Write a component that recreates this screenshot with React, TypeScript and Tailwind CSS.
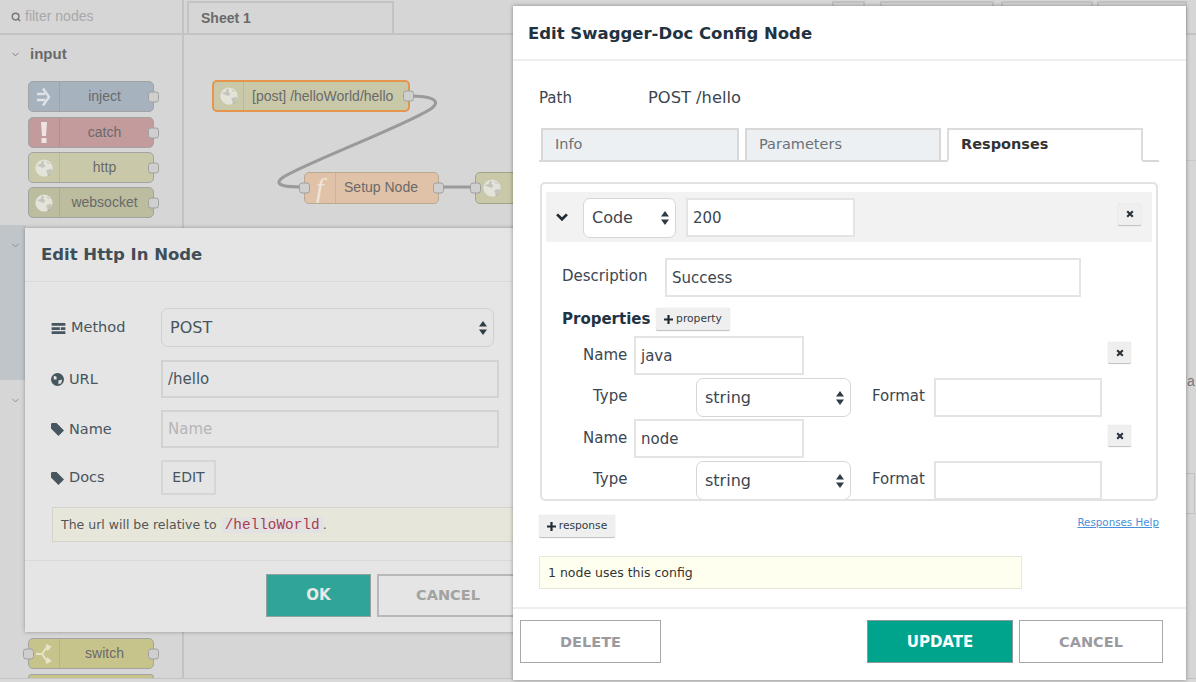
import { ChevronDown, Search } from 'lucide-react';
import { ReactNode } from 'react';

const globe = (
  <svg viewBox="0 0 24 24" className="h-[18px] w-[18px]">
    <circle cx="12" cy="12" r="11.5" fill="#e3e3da" />
    <path d="M2 8l5-1 3-5 2 1-1 3 3 3-3 3-5-2zM21 6l-4 0-2-3zM15 15l6-2 2 2-3 6-3 2-1-5z" fill="#00000022" />
  </svg>
);

const Port = ({ side }: { side: 'left' | 'right' }) => (
  <span
    className={`absolute top-1/2 h-[11px] w-[11px] -translate-y-1/2 rounded-[3px] border border-[#a0a0a0] bg-[#cfcfcf] ${
      side === 'left' ? 'left-[-6px]' : 'right-[-6px]'
    }`}
  />
);

const PaletteNode = ({
  label,
  color,
  icon,
  className = '',
  inPort = false,
}: {
  label: string;
  color: string;
  icon: ReactNode;
  className?: string;
  inPort?: boolean;
}) => (
  <div className={`relative flex h-[31px] w-[126px] rounded-[5px] border border-[#a3a3a3] ${color} ${className}`}>
    <div className="flex w-[31px] items-center justify-center border-r border-[#00000014]">{icon}</div>
    <div className="flex-1 pr-1 text-center text-[14px] leading-[29px] text-[#6a6a6a]">{label}</div>
    {inPort && <Port side="left" />}
    <Port side="right" />
  </div>
);

const Updown = () => (
  <svg viewBox="0 0 8 14" className="h-[14px] w-[8px]" fill="#2f3b45">
    <path d="M4 0l4 5.5H0zM4 14l4-5.5H0z" />
  </svg>
);

const Select = ({ value, className }: { value: string; className: string }) => (
  <div className={`flex items-center justify-between rounded-[7px] border border-[#d6d6d6] bg-white pr-[6px] pl-[8px] text-[16px] text-[#3b4650] ${className}`}>
    <span>{value}</span>
    <Updown />
  </div>
);

const Input = ({ value, className }: { value?: string; className: string }) => (
  <div className={`flex items-center border-2 border-[#e4e4e4] bg-white px-[5px] pt-[1px] text-[15px] text-[#3b4650] ${className}`}>{value}</div>
);

const CloseBtn = () => (
  <div className="flex h-[22px] w-[23px] items-center justify-center rounded-[2px] border-b border-b-[#c4c4c4] bg-[#efefef] shadow-[0_0_1px_#bbb]">
    <svg viewBox="0 0 10 10" className="h-[8px] w-[8px]" stroke="#27313a" strokeWidth="2.6">
      <path d="M1.5 1.5l7 7M8.5 1.5l-7 7" />
    </svg>
  </div>
);

const AddBtn = ({ label, className }: { label: string; className: string }) => (
  <div className={`flex h-[23px] items-center justify-center gap-[3px] rounded-[2px] border-b border-b-[#c4c4c4] bg-[#efefef] pt-[1px] text-[10.7px] text-[#2f3b45] shadow-[0_0_1px_#bbb] ${className}`}>
    <svg viewBox="0 0 9 9" className="h-[9px] w-[9px]" stroke="#222c34" strokeWidth="2.2">
      <path d="M4.5 0v9M0 4.5h9" />
    </svg>
    {label}
  </div>
);

const PropertyRows = ({ name }: { name: string }) => (
  <div className="flex flex-col">
    <div className="flex h-[42px] items-start">
      <span className="mt-[8px] w-[51px] text-[15px] text-[#3b4650]">Name</span>
      <Input value={name} className="h-[39px] w-[170px]" />
      <div className="mt-[6px] ml-[304px]">
        <CloseBtn />
      </div>
    </div>
    <div className="flex h-[41px] items-start">
      <span className="mt-[7px] ml-[10px] w-[103px] text-[15px] text-[#3b4650]">Type</span>
      <Select value="string" className="h-[39px] w-[155px]" />
      <span className="mt-[7px] ml-[21px] w-[62px] text-[15px] text-[#3b4650]">Format</span>
      <Input className="h-[39px] w-[168px]" />
    </div>
  </div>
);

const Tab = ({ label, className, active = false }: { label: string; className: string; active?: boolean }) => (
  <div
    className={`flex h-[32px] items-center border-2 px-[12px] text-[14.5px] ${className} ${
      active
        ? 'mb-[-2px] h-[34px] border-[#dcdcdc] border-b-white bg-white font-bold text-[#333]'
        : 'border-[#d8d8d8] border-b-0 bg-[#edf0f2] text-[#6b7278]'
    }`}
  >
    {label}
  </div>
);

const LeftRow = ({ icon, label, className = '', children }: { icon: ReactNode; label: string; className?: string; children: ReactNode }) => (
  <div className={`flex items-center ${className}`}>
    <div className="flex w-[110px] items-center gap-[5px] pt-[1px] text-[14.5px] text-[#47555e]">
      {icon}
      {label}
    </div>
    {children}
  </div>
);

const tag = (
  <svg viewBox="0 0 14 14" className="h-[13px] w-[13px]" fill="#47555e">
    <path d="M0 1.5A1.5 1.5 0 011.5 0H6l8 8-6 6-8-8z" />
  </svg>
);

export default function App() {
  return (
    <div className="relative h-[682px] w-[1196px] overflow-hidden bg-[#d6d6d6] [font-family:'DejaVu_Sans',sans-serif]">
      {/* toolbar strip */}
      <div className="flex h-[35px] border-b-2 border-[#c3c3c3] [font-family:'Liberation_Sans',sans-serif]">
        <div className="flex w-[184px] items-center gap-[4px] border-r-2 border-[#c3c3c3] pl-[11px] text-[14px] text-[#a8a8a8]">
          <Search size={10} strokeWidth={3.5} className="text-[#777]" />
          filter nodes
        </div>
        <div className="ml-[3px] flex h-[32px] w-[207px] items-center self-end border-2 border-b-0 border-[#c3c3c3] pl-[12px] text-[14px] font-bold text-[#6a6a6a]">
          Sheet 1
        </div>
        {/* tabs peeking from behind the config dialog */}
        <div className="ml-[438px] h-[32px] w-[33px] self-end border-2 border-b-0 border-[#c3c3c3]" />
        <div className="ml-[15px] h-[32px] w-[114px] self-end border-2 border-b-0 border-[#c3c3c3]" />
        <div className="ml-[7px] h-[32px] w-[92px] self-end border-2 border-b-0 border-[#c3c3c3]" />
        <div className="ml-[4px] h-[32px] w-[90px] self-end border-2 border-b-0 border-[#c3c3c3]" />
      </div>

      {/* palette */}
      <div className="absolute top-[35px] left-0 h-[647px] w-[184px] border-r-2 border-[#c3c3c3] [font-family:'Liberation_Sans',sans-serif]">
        <div className="flex h-[38px] items-center gap-[9px] pl-[10px] text-[15px] font-bold text-[#6a6a6a]">
          <ChevronDown size={11} className="text-[#777]" />
          input
        </div>
        <div className="mt-[8px] ml-[28px] flex flex-col gap-[4px]">
          <PaletteNode
            label="inject"
            color="bg-[#a6b2be]"
            className="mb-[1px]"
            icon={
              <svg viewBox="0 0 14 20" className="h-[20px] w-[14px]" fill="none" stroke="#dfe3e7" strokeWidth="2.4">
                <path d="M0 7h8M0 13h8M6 1.5l6 8.5-6 8.5" />
              </svg>
            }
          />
          <PaletteNode
            label="catch"
            color="bg-[#c39b9c]"
            icon={
              <svg viewBox="0 0 6 21" className="h-[21px] w-[6px]" fill="#efe3e3">
                <path d="M0 0h6l-1 14H1zM.5 16h5v5h-5z" />
              </svg>
            }
          />
          <PaletteNode label="http" color="bg-[#c9c9a9]" icon={globe} />
          <PaletteNode label="websocket" color="bg-[#bcbc9f]" icon={globe} />
        </div>
        <div className="absolute top-[190px] left-0 h-[155px] w-[26px] bg-[#bfc5c9]">
          <ChevronDown size={11} className="mt-[15px] ml-[10px] text-[#888]" />
        </div>
        <ChevronDown size={11} className="absolute top-[360px] left-[10px] text-[#888]" />
        <div className="absolute top-[603px] left-[28px]">
          <PaletteNode
            label="switch"
            color="bg-[#c7c48b]"
            inPort
            icon={
              <svg viewBox="0 0 16 20" className="h-[20px] w-[16px]" fill="none" stroke="#e6e4c8" strokeWidth="2">
                <path d="M0 10h6l5-7h3M6 10l5 7h3M10 1l4 2-3 3M10 19l4-2-3-3" />
              </svg>
            }
          />
        </div>
        <div className="absolute top-[639px] left-[28px] h-[4px] w-[126px] rounded-t-[5px] border border-b-0 border-[#a3a3a3] bg-[#c7c48b]" />
      </div>
      <div className="absolute bottom-0 left-0 h-[4px] w-[1196px] border-t border-[#c3c3c3] bg-[#d9d9d9]" />

      {/* workspace canvas */}
      <svg className="absolute top-0 left-0" width="1196" height="682" fill="none" stroke="#9a9a9a" strokeWidth="3">
        <path d="M410 96C430 96 442 100 432 108C410 124 300 165 282 178C272 186 288 187 304 187" />
        <path d="M439 187H475" />
      </svg>
      <div className="absolute top-[80px] left-[212px] flex h-[32px] w-[198px] rounded-[5px] border-2 border-[#e5964c] bg-[#c9c9a9] [font-family:'Liberation_Sans',sans-serif]">
        <div className="flex w-[30px] items-center justify-center border-r border-[#00000014]">{globe}</div>
        <div className="flex-1 pl-[8px] text-[14px] leading-[28px] whitespace-nowrap text-[#6a6a6a]">[post] /helloWorld/hello</div>
        <Port side="right" />
      </div>
      <div className="absolute top-[172px] left-[304px] flex h-[32px] w-[135px] rounded-[5px] border border-[#b9a892] bg-[#e0c2a8] [font-family:'Liberation_Sans',sans-serif]">
        <div className="flex w-[31px] items-center justify-center border-r border-[#00000014] [font-family:'Liberation_Serif',serif] text-[28px] text-[#efe5d8] italic">f</div>
        <div className="flex-1 pr-[12px] text-center text-[14px] leading-[29px] text-[#6a6a6a]">Setup Node</div>
        <Port side="left" />
        <Port side="right" />
      </div>
      <div className="absolute top-[172px] left-[475px] flex h-[32px] w-[60px] rounded-[5px] border border-[#a3a38c] bg-[#c9c9a9]">
        <div className="flex w-[32px] items-center justify-center">{globe}</div>
        <Port side="left" />
      </div>

      {/* sidebar bits to the right of the config dialog */}
      <div className="absolute top-[160px] left-[1186px] h-[1px] w-[10px] bg-[#c9c9c9]" />
      <span className="absolute top-[371px] left-[1187px] [font-family:'Liberation_Sans',sans-serif] text-[14px] text-[#777]">a</span>
      <div className="absolute top-[473px] left-[1186px] h-[41px] w-[9px] border border-l-0 border-[#c3c3c3]" />

      {/* Http In dialog */}
      <div className="absolute top-[228px] left-[25px] flex h-[404px] w-[500px] flex-col bg-[#e5e5e5] shadow-[0_0_4px_#00000050]">
        <div className="flex h-[54px] items-center border-b border-[#d9d9d9] pt-[2px] pl-[16px] text-[16.5px] font-bold text-[#3f4e57]">Edit Http In Node</div>
        <div className="flex flex-col gap-[12px] pt-[26px] pl-[26px]">
          <LeftRow
            className="mb-[1px]"
            icon={
              <svg viewBox="0 0 15 12" className="h-[11px] w-[15px]" fill="#47555e">
                <path d="M0 0h15v3H0zM0 4.5h9v3H0zM10 4.5h5v3h-5zM0 9h15v3H0z" />
              </svg>
            }
            label="Method"
          >
            <div className="flex h-[39px] w-[333px] items-center justify-between rounded-[7px] border border-[#d0d0d0] pr-[6px] pl-[8px] text-[16px] text-[#47555e]">
              POST
              <Updown />
            </div>
          </LeftRow>
          <LeftRow
            icon={
              <svg viewBox="0 0 14 14" className="h-[13px] w-[13px]">
                <circle cx="7" cy="7" r="7" fill="#47555e" />
                <path d="M3 3l3 1 0 3-3 0zM8 8l4-1-1 4-3 1z" fill="#e5e5e5" />
              </svg>
            }
            label="URL"
          >
            <div className="flex h-[38px] w-[338px] items-center border-2 border-[#d2d2d2] px-[5px] pt-[1px] text-[15px] text-[#47555e]">/hello</div>
          </LeftRow>
          <LeftRow icon={tag} label="Name">
            <div className="flex h-[38px] w-[338px] items-center border-2 border-[#d2d2d2] px-[5px] pt-[1px] text-[15px] text-[#b5b5b5]">Name</div>
          </LeftRow>
          <LeftRow icon={tag} label="Docs">
            <div className="flex h-[35px] w-[55px] items-center justify-center border-2 border-[#d6d6d6] text-[14px] text-[#47555e]">EDIT</div>
          </LeftRow>
        </div>
        <div className="mt-[12px] ml-[27px] flex h-[35px] items-center gap-[5px] border border-[#d4d4cc] bg-[#e6e6da] pt-[2px] pl-[8px] text-[12.5px] text-[#555]">
          The url will be relative to
          <span>
            <code className="bg-[#e2e2e2] px-[3px] [font-family:'Liberation_Mono',monospace] text-[14.4px] text-[#ab3a4e]">/helloWorld</code>.
          </span>
        </div>
        <div className="mt-[18px] flex flex-1 gap-[6px] border-t border-[#d9d9d9] pt-[13px] pl-[241px]">
          <div className="flex h-[43px] w-[105px] items-center justify-center border border-[#8fa3a0] bg-[#30a597] text-[15px] font-bold text-[#e8e8e8]">OK</div>
          <div className="flex h-[43px] w-[142px] items-center justify-center border-2 border-[#b8b8b8] text-[14.5px] font-bold text-[#a2a2a2]">CANCEL</div>
        </div>
      </div>

      {/* Swagger config dialog */}
      <div className="absolute top-[6px] left-[513px] flex h-[674px] w-[673px] flex-col bg-white shadow-[0_0_4px_#00000060]">
        <div className="flex h-[55px] items-center border-b-2 border-[#eeeeee] pt-[3px] pl-[15px] text-[16.5px] font-bold text-[#1f3342]">Edit Swagger-Doc Config Node</div>
        <div className="flex flex-col pl-[26px]">
          <div className="mt-[25px] flex h-[24px] items-center text-[15px] text-[#3b4650]">
            <span className="w-[109px]">Path</span>
            <span className="text-[16.3px]">POST /hello</span>
          </div>
          <div className="mt-[18px] flex h-[34px] w-[620px] items-start gap-[6px] border-b-2 border-[#d8d8d8] pl-[2px]">
            <Tab label="Info" className="w-[198px]" />
            <Tab label="Parameters" className="w-[196px]" />
            <Tab label="Responses" className="w-[196px]" active />
          </div>
          <div className="mt-[20px] ml-[1px] h-[319px] w-[618px] overflow-hidden rounded-[5px] border-2 border-[#e2e2e2] px-[4px] pt-[8px]">
            <div className="flex h-[50px] items-center bg-[#f2f2f2] pt-[1px] pr-[11px] pl-[9px]">
              <svg viewBox="0 0 14 10" className="h-[9px] w-[14px]" fill="none" stroke="#1f2c36" strokeWidth="3">
                <path d="M1.5 1.5L7 7l5.5-5.5" />
              </svg>
              <Select value="Code" className="ml-[14px] h-[40px] w-[93px]" />
              <Input value="200" className="ml-[10px] h-[39px] w-[169px]" />
              <div className="ml-auto mb-[6px]">
                <CloseBtn />
              </div>
            </div>
            <div className="pl-[16px]">
              <div className="mt-[16px] flex items-center text-[15px] text-[#3b4650]">
                <span className="w-[103px] pb-[2px]">Description</span>
                <Input value="Success" className="h-[39px] w-[416px]" />
              </div>
              <div className="mt-[11px] flex h-[23px] items-center">
                <span className="w-[94px] text-[15px] font-bold text-[#1f3342]">Properties</span>
                <AddBtn label="property" className="w-[74px]" />
              </div>
              <div className="mt-[5px] pl-[21px]">
                <PropertyRows name="java" />
                <PropertyRows name="node" />
              </div>
            </div>
          </div>
          <div className="mt-[14px] flex items-start justify-between pr-[27px]">
            <AddBtn label="response" className="w-[76px]" />
            <span className="text-[10.3px] text-[#4a90d9] underline">Responses Help</span>
          </div>
          <div className="mt-[18px] flex h-[33px] w-[483px] items-center border border-[#e8e8d8] bg-[#ffffef] pt-[2px] pl-[8px] text-[12.5px] text-[#333]">1 node uses this config</div>
        </div>
        <div className="mt-[18px] flex flex-1 border-t-2 border-[#eeeeee] pt-[11px] pl-[7px]">
          <div className="flex h-[43px] w-[141px] items-center justify-center border border-[#a8a8a8] pt-[2px] text-[14.5px] font-bold text-[#9a9a9f]">DELETE</div>
          <div className="ml-[206px] flex h-[43px] w-[146px] items-center justify-center border border-[#8a9a98] bg-[#00a38c] pt-[2px] text-[15px] font-bold text-white">UPDATE</div>
          <div className="ml-[6px] flex h-[43px] w-[144px] items-center justify-center border border-[#a8a8a8] pt-[2px] text-[14.5px] font-bold text-[#9a9a9f]">CANCEL</div>
        </div>
      </div>
    </div>
  );
}
